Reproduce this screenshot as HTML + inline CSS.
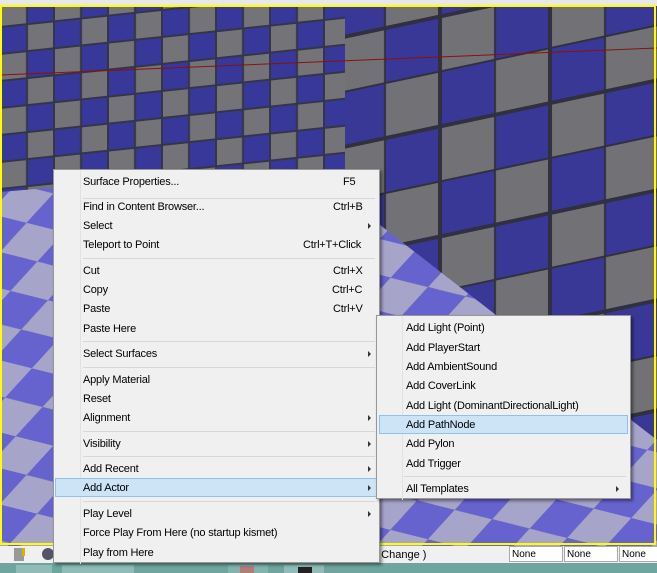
<!DOCTYPE html>
<html><head><meta charset="utf-8"><style>
*{margin:0;padding:0;box-sizing:border-box}
body{width:657px;height:573px;overflow:hidden;position:relative;background:#f0f0f0;font-family:"Liberation Sans",sans-serif;font-size:11px;color:#000}
.abs{position:absolute}
.menu{position:absolute;background:#f0f0f0;border:1px solid #979797;box-shadow:2px 2px 3px rgba(0,0,0,.45)}
.it{position:absolute;left:29px;white-space:nowrap;letter-spacing:-0.2px;margin-top:1px}
.sc{position:absolute;white-space:nowrap;letter-spacing:-0.2px;margin-top:1px}
.ar{position:absolute;width:0;height:0;border-left:3px solid #333;border-top:3px solid transparent;border-bottom:3px solid transparent}
.sep{position:absolute;height:1px;background:#d7d7d7}
.hl{position:absolute;background:#cde3f6;border:1px solid #8fc1eb}
.box{position:absolute;top:546px;height:16px;background:#fff;border:1px solid #aaa;font-size:10px;padding:2px 0 0 2px}
</style></head><body>
<svg class="abs" style="left:0;top:0" width="657" height="573">
<defs>
<pattern id="w" width="54" height="54" patternUnits="userSpaceOnUse" patternTransform="skewY(-6)">
<rect width="54" height="54" fill="#35354a"/>
<rect x="1" y="1" width="25" height="25" fill="#747478"/><rect x="28" y="1" width="25" height="25" fill="#38379a"/>
<rect x="1" y="28" width="25" height="25" fill="#38379a"/><rect x="28" y="28" width="25" height="25" fill="#747478"/>
</pattern>
<pattern id="w2" width="110" height="110" patternUnits="userSpaceOnUse" patternTransform="skewY(-12)">
<rect width="110" height="110" fill="#303040"/>
<rect x="2" y="2" width="52" height="52" fill="#727276"/><rect x="56" y="2" width="52" height="52" fill="#3a3896"/>
<rect x="2" y="56" width="52" height="52" fill="#3a3896"/><rect x="56" y="56" width="52" height="52" fill="#727276"/>
</pattern>
<pattern id="f" width="90" height="60" patternUnits="userSpaceOnUse" patternTransform="skewX(-35) rotate(12)">
<rect width="45" height="30" fill="#6663cf"/><rect x="45" width="45" height="30" fill="#a7a4ca"/>
<rect y="30" width="45" height="30" fill="#a7a4ca"/><rect x="45" y="30" width="45" height="30" fill="#6663cf"/>
</pattern>
</defs>
<rect x="0" y="0" width="657" height="6" fill="#e8e8e8"/>
<rect x="0" y="6" width="657" height="540" fill="url(#w)"/>
<polygon points="345,6 657,6 657,440 380,225 345,205" fill="url(#w2)"/>
<polygon points="0,192 120,182 380,225 657,440 657,546 0,546" fill="url(#f)"/>
<line x1="0" y1="75" x2="657" y2="48" stroke="#8a1010" stroke-width="1"/>
<rect x="1" y="6" width="654" height="538" fill="none" stroke="#ffff00" stroke-width="2"/>
<rect x="0" y="563" width="657" height="10" fill="#6ea59f"/>
<rect x="16" y="565" width="36" height="8" fill="#8fbcb6"/><rect x="62" y="565" width="36" height="8" fill="#8fbcb6"/>
<rect x="98" y="565" width="36" height="8" fill="#8fbcb6"/><rect x="240" y="566" width="14" height="7" fill="#e02020"/>
<rect x="228" y="565" width="40" height="8" fill="#8fbcb6" opacity=".6"/><rect x="284" y="565" width="40" height="8" fill="#8fbcb6"/>
<rect x="298" y="567" width="14" height="6" fill="#222"/>
<rect x="0" y="546" width="657" height="17" fill="#f0f0f0"/>
<rect x="14" y="548" width="10" height="13" fill="#999"/><rect x="22" y="548" width="3" height="8" fill="#e0b000"/>
<circle cx="48" cy="554" r="6" fill="#556"/>
</svg>
<div class="abs" style="left:372px;top:549px;font-size:11px">o Change )</div>
<div class="box" style="left:509px;width:54px">None</div>
<div class="box" style="left:564px;width:54px">None</div>
<div class="box" style="left:619px;width:40px">None</div>

<div class="menu" style="left:53px;top:169px;width:327px;height:394px">
<div class="abs" style="left:26px;top:0;width:1px;height:394px;background:#e2e2e2"></div>
<div class="hl" style="left:1px;top:308px;width:323px;height:19px"></div>
<div class="it" style="top:5px">Surface Properties...</div><div class="sc" style="left:289px;top:5px">F5</div>
<div class="sep" style="left:29px;top:28px;width:292px"></div>
<div class="it" style="top:30px">Find in Content Browser...</div><div class="sc" style="left:279px;top:30px">Ctrl+B</div>
<div class="it" style="top:49px">Select</div><div class="ar" style="left:314px;top:53px"></div>
<div class="it" style="top:68px">Teleport to Point</div><div class="sc" style="left:249px;top:68px">Ctrl+T+Click</div>
<div class="sep" style="left:29px;top:88px;width:292px"></div>
<div class="it" style="top:94px">Cut</div><div class="sc" style="left:279px;top:94px">Ctrl+X</div>
<div class="it" style="top:113px">Copy</div><div class="sc" style="left:278px;top:113px">Ctrl+C</div>
<div class="it" style="top:132px">Paste</div><div class="sc" style="left:279px;top:132px">Ctrl+V</div>
<div class="it" style="top:152px">Paste Here</div>
<div class="sep" style="left:29px;top:171px;width:292px"></div>
<div class="it" style="top:177px">Select Surfaces</div><div class="ar" style="left:314px;top:181px"></div>
<div class="sep" style="left:29px;top:197px;width:292px"></div>
<div class="it" style="top:203px">Apply Material</div>
<div class="it" style="top:222px">Reset</div>
<div class="it" style="top:241px">Alignment</div><div class="ar" style="left:314px;top:245px"></div>
<div class="sep" style="left:29px;top:261px;width:292px"></div>
<div class="it" style="top:267px">Visibility</div><div class="ar" style="left:314px;top:271px"></div>
<div class="sep" style="left:29px;top:286px;width:292px"></div>
<div class="it" style="top:292px">Add Recent</div><div class="ar" style="left:314px;top:296px"></div>
<div class="it" style="top:311px">Add Actor</div><div class="ar" style="left:314px;top:315px"></div>
<div class="sep" style="left:29px;top:331px;width:292px"></div>
<div class="it" style="top:337px">Play Level</div><div class="ar" style="left:314px;top:341px"></div>
<div class="it" style="top:356px">Force Play From Here (no startup kismet)</div>
<div class="it" style="top:376px">Play from Here</div>
</div>

<div class="menu" style="left:376px;top:315px;width:255px;height:184px">
<div class="abs" style="left:25px;top:0;width:1px;height:184px;background:#e2e2e2"></div>
<div class="hl" style="left:2px;top:99px;width:249px;height:19px"></div>
<div class="it" style="top:5px">Add Light (Point)</div>
<div class="it" style="top:25px">Add PlayerStart</div>
<div class="it" style="top:44px">Add AmbientSound</div>
<div class="it" style="top:63px">Add CoverLink</div>
<div class="it" style="top:83px">Add Light (DominantDirectionalLight)</div>
<div class="it" style="top:102px">Add PathNode</div>
<div class="it" style="top:121px">Add Pylon</div>
<div class="it" style="top:141px">Add Trigger</div>
<div class="sep" style="left:27px;top:160px;width:222px"></div>
<div class="it" style="top:166px">All Templates</div><div class="ar" style="left:239px;top:170px"></div>
</div>
</body></html>
